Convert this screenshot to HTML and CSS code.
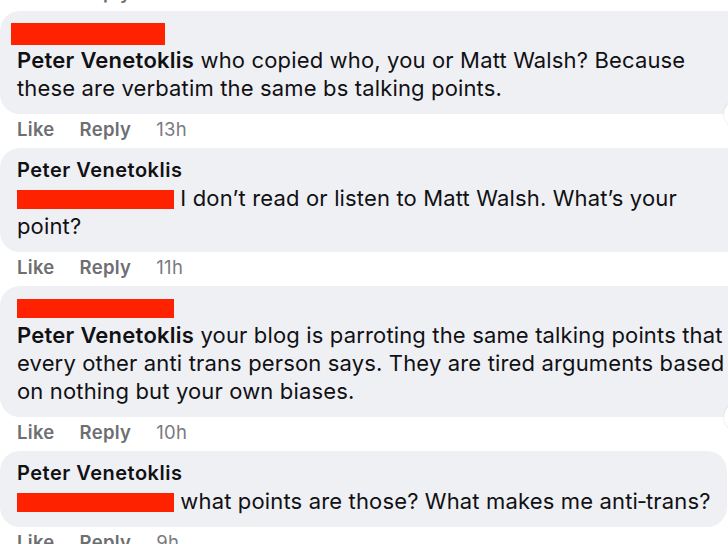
FILE: index.html
```html
<!DOCTYPE html>
<html lang="en">
<head>
    <meta charset="UTF-8">
    <meta name="viewport" content="width=device-width, initial-scale=1.0">
    <title>Comments</title>
    <link rel="stylesheet" href="styles.css">
</head>
<body>
    <div class="thread">
        <div class="actions actions-top">
            <span class="act">Like</span>
            <span class="act">Reply</span>
            <span class="time">14h</span>
        </div>

        <div class="comment">
            <div class="bubble">
                <span class="redact redact-head"></span><br>
                <span class="name">Peter Venetoklis</span> who copied who, you or Matt Walsh? Because these are verbatim the same bs talking points.
                <span class="badge"></span>
            </div>
            <div class="actions">
                <span class="act">Like</span>
                <span class="act">Reply</span>
                <span class="time">13h</span>
            </div>
        </div>

        <div class="comment">
            <div class="bubble">
                <span class="name name-head">Peter Venetoklis</span><br>
                <span class="redact"></span> I don’t read or listen to Matt Walsh. What’s your point?
            </div>
            <div class="actions">
                <span class="act">Like</span>
                <span class="act">Reply</span>
                <span class="time">11h</span>
            </div>
        </div>

        <div class="comment">
            <div class="bubble">
                <span class="redact"></span><br>
                <span class="name">Peter Venetoklis</span> your blog is parroting the same talking points that every other anti trans person says. They are tired arguments based on nothing but your own biases.
                <span class="badge"></span>
            </div>
            <div class="actions">
                <span class="act">Like</span>
                <span class="act">Reply</span>
                <span class="time">10h</span>
            </div>
        </div>

        <div class="comment">
            <div class="bubble bubble-short">
                <span class="name name-head">Peter Venetoklis</span><br>
                <span class="redact"></span> what points are those? What makes me anti&#8209;trans?
            </div>
            <div class="actions">
                <span class="act">Like</span>
                <span class="act">Reply</span>
                <span class="time">9h</span>
            </div>
        </div>
    </div>
</body>
</html>
```

FILE: styles.css
```css
:root {
    --bubble-bg: #eff0f4;
    --text-color: #111114;
    --muted: #6e6e73;
    --redact: #ff2200;
}
html, body {
    margin: 0;
    background: #ffffff;
    overflow: hidden;
}
body {
    font-family: Inter, "Noto Sans", sans-serif;
    color: var(--text-color);
}
.thread {
    width: 760px;
}
.bubble {
    position: relative;
    background: var(--bubble-bg);
    border-radius: 20px;
    padding: 7px 20px 12px 17px;
    font-size: 22px;
    line-height: 28px;
    letter-spacing: 0.15px;
}
.bubble-short {
    width: 710px;
    padding-right: 0;
}
.name {
    font-weight: 600;
    letter-spacing: 0.25px;
}
.name-head {
    font-size: 20px;
    letter-spacing: 0.5px;
}
.redact {
    display: inline-block;
    width: 157px;
    height: 19px;
    background: var(--redact);
    vertical-align: -3px;
}
.redact-head {
    width: 154px;
    height: 22px;
    margin-left: -6px;
    vertical-align: -5px;
}
.badge {
    position: absolute;
    left: 724px;
    bottom: -14px;
    width: 28px;
    height: 28px;
    border-radius: 50%;
    background: #ffffff;
    box-shadow: 0 0 2px rgba(0,0,0,0.15);
}
.actions {
    display: flex;
    gap: 25px;
    padding-left: 17px;
    font-size: 18.5px;
    line-height: 28px;
    padding-top: 1px;
    margin-bottom: 5px;
    letter-spacing: 0.3px;
    color: var(--muted);
}
.actions-top {
    margin-top: -23px;
}
.act {
    font-weight: 600;
}
.time {
    color: #7a7a80;
}
```
